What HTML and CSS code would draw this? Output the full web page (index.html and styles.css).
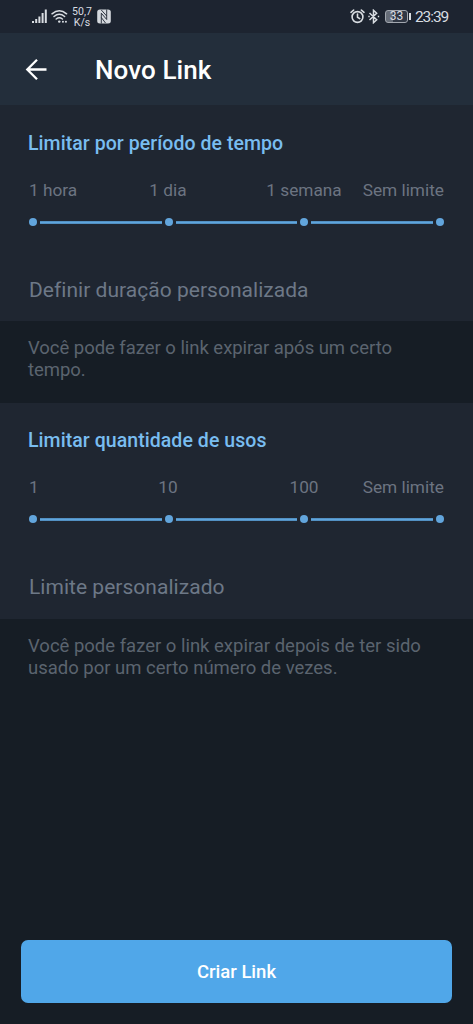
FILE: index.html
```html
<!DOCTYPE html>
<html lang="pt-BR">
<head>
<meta charset="utf-8">
<title>Novo Link</title>
<link rel="stylesheet" href="styles.css">
</head>
<body>
<div class="screen">
  <div class="status">
    <svg class="signal" width="16" height="15" viewBox="0 0 16 15" fill="#d9dde2"><path d="M0 12h2v2H0zM3.200 10h2v4h-2zM6.400 7.500h2v6.500h-2zM9.600 4h2v10h-2zM12.800 .5h2v13.500h-2z"/></svg>
    <svg class="wifi" width="17" height="15" viewBox="0 0 17 15" fill="none" stroke="#d9dde2" stroke-width="1.500" stroke-linecap="round"><path d="M1 4.800Q8.300-1.300 15.600 4.800M3 7.500Q8.300 3 13.600 7.500M5.200 10Q8.300 7.500 11.400 10"/><path d="M8.200 12.600h.1" stroke-width="2.400"/><path d="M11.900 12.700h.1M14.900 12.700h.1" stroke-width="1.900"/></svg>
    <div class="speed"><span>50,7</span><span>K/s</span></div>
    <svg class="nfc" width="14" height="15" viewBox="0 0 14 15"><path d="M3 .5h8q2.800 0 2.800 2.500v9q0 2.500-2.800 2.500H3Q.2 14.500.2 12V3Q.2.500 3 .5z" fill="#d5d9de"/><path d="M4.300 14.500V4.200l5.400 6.300V.5M4.300 1l5.400 6M4.300 8.500l4.200 5.500" fill="none" stroke="#1e2531" stroke-width=".9"/></svg>
    <span class="spacer"></span>
    <svg class="alarm" width="15" height="15" viewBox="0 0 15 15" fill="none" stroke="#d9dde2" stroke-width="1.600" stroke-linecap="round"><circle cx="7.500" cy="8" r="5.400"/><path d="M7.500 5v3.200l2.200 1.400M1 3.300l2.600-2.200M14 3.300l-2.600-2.200"/></svg>
    <svg class="bluetooth" width="12" height="15" viewBox="0 0 12 15" fill="none" stroke="#d9dde2" stroke-width="1.500"><path d="M1.500 4l7.200 6.800L5.500 13.700V1.300l3.200 2.900L1.500 11M.3 7.500h1.400M9.800 7.500h1.400"/></svg>
    <div class="battery"><span>33</span></div>
    <span class="clock">23:39</span>
  </div>
  <header class="header">
    <svg class="back" width="22" height="22" viewBox="0 0 22 22" fill="none" stroke="#fff" stroke-width="2.300"><path d="M21.500 10.500H2.500M12 .8L2.300 10.500l9.700 9.700"/></svg>
    <h1 class="title">Novo Link</h1>
  </header>
  <section class="card">
    <h2 class="heading">Limitar por período de tempo</h2>
    <div class="labels"><span>1 hora</span><span>1 dia</span><span>1 semana</span><span>Sem limite</span></div>
    <div class="slider"><i class="dot"></i><i class="line"></i><i class="dot"></i><i class="line"></i><i class="dot"></i><i class="line"></i><i class="dot"></i></div>
    <div class="custom">Definir duração personalizada</div>
  </section>
  <p class="note note-time">Você pode fazer o link expirar após um certo<br>tempo.</p>
  <section class="card card-uses">
    <h2 class="heading">Limitar quantidade de usos</h2>
    <div class="labels"><span>1</span><span>10</span><span>100</span><span>Sem limite</span></div>
    <div class="slider"><i class="dot"></i><i class="line"></i><i class="dot"></i><i class="line"></i><i class="dot"></i><i class="line"></i><i class="dot"></i></div>
    <div class="custom">Limite personalizado</div>
  </section>
  <p class="note note-uses">Você pode fazer o link expirar depois de ter sido<br>usado por um certo número de vezes.</p>
  <button class="create">Criar Link</button>
</div>
</body>
</html>
```
FILE: styles.css
```css
* { box-sizing: border-box; }
body { margin: 0; background: #161d25; font-family: Roboto, sans-serif; }
h1, h2, p { margin: 0; font-weight: 500; }
.screen { width: 473px; height: 1024px; display: flex; flex-direction: column; background: #161d25; }
.status { height: 33px; flex: none; display: flex; align-items: center; padding: 0 25px 0 32px; background: #1d2430; color: #d9dde2; }
.wifi { margin-left: 3px; }
.speed { display: flex; flex-direction: column; width: 22px; margin-left: 3px; font-size: 10.500px; line-height: 11px; text-align: center; white-space: nowrap; }
.nfc { margin-left: 4px; }
.spacer { flex: 1; }
.bluetooth { margin-left: 3px; }
.battery { width: 26px; height: 13px; margin: 0 4px 0 5px; display: flex; align-items: center; }
.battery span { width: 23px; height: 13px; border: 1px solid #a2a7af; border-radius: 3px; background: linear-gradient(90deg, #666d78 35%, #303744 35%); font-size: 12px; line-height: 11px; text-align: center; }
.battery::after { content: ""; width: 2px; height: 7px; margin-left: 1px; background: #d9dde2; }
.clock { font-size: 15.500px; line-height: 34px; padding-top: 1px; white-space: nowrap; width: 33px; letter-spacing: -1.100px; }
.header { height: 72px; flex: none; display: flex; align-items: center; padding: 1px 0 0 25px; background: #232e3b; }
.title { margin-left: 48px; font-size: 26px; line-height: 32px; letter-spacing: 0.100px; color: #fff; white-space: nowrap; }
.card { height: 216px; flex: none; padding: 27px 28px 0; background: #1f2631; }
.card-uses { padding-top: 26px; }
.note-time { height: 82px; }
.heading { height: 24px; font-size: 19.500px; line-height: 24px; letter-spacing: 0.060px; color: #79bdf0; white-space: nowrap; }
.labels { height: 24px; margin: 22px 1px 0; display: grid; grid-template-columns: 71px 136px 136px 72px; font-size: 17.250px; line-height: 24px; color: #6c7481; white-space: nowrap; }
.labels span { text-align: center; }
.labels span:first-child { text-align: left; }
.labels span:last-child { display: flex; justify-content: flex-end; }
.slider { height: 8px; margin: 16px 0 0 1px; width: 415px; display: flex; align-items: center; gap: 3px; }
.dot { flex: none; width: 8px; height: 8px; border-radius: 50%; background: #62a5dc; }
.line { flex: 1; height: 3px; background: linear-gradient(#4c86b5, #5fa5dd 50%, #4c86b5); }
.custom { height: 30px; margin: 49px 0 0 1px; font-size: 21px; line-height: 30px; letter-spacing: 0.030px; color: #6d7887; white-space: nowrap; }
.note { flex: none; padding: 17px 28px 0; font-size: 18.500px; line-height: 21.500px; letter-spacing: -0.040px; font-weight: 400; color: #5b646f; white-space: nowrap; }
.note-uses { letter-spacing: -0.010px; }
.create { flex: none; width: 431px; height: 63px; margin: auto 0 21px 21px; padding: 1px 0 0; border: 0; border-radius: 7px; background: #50a7e9; font: 500 18.500px/62px Roboto, sans-serif; color: #fff; }
```
